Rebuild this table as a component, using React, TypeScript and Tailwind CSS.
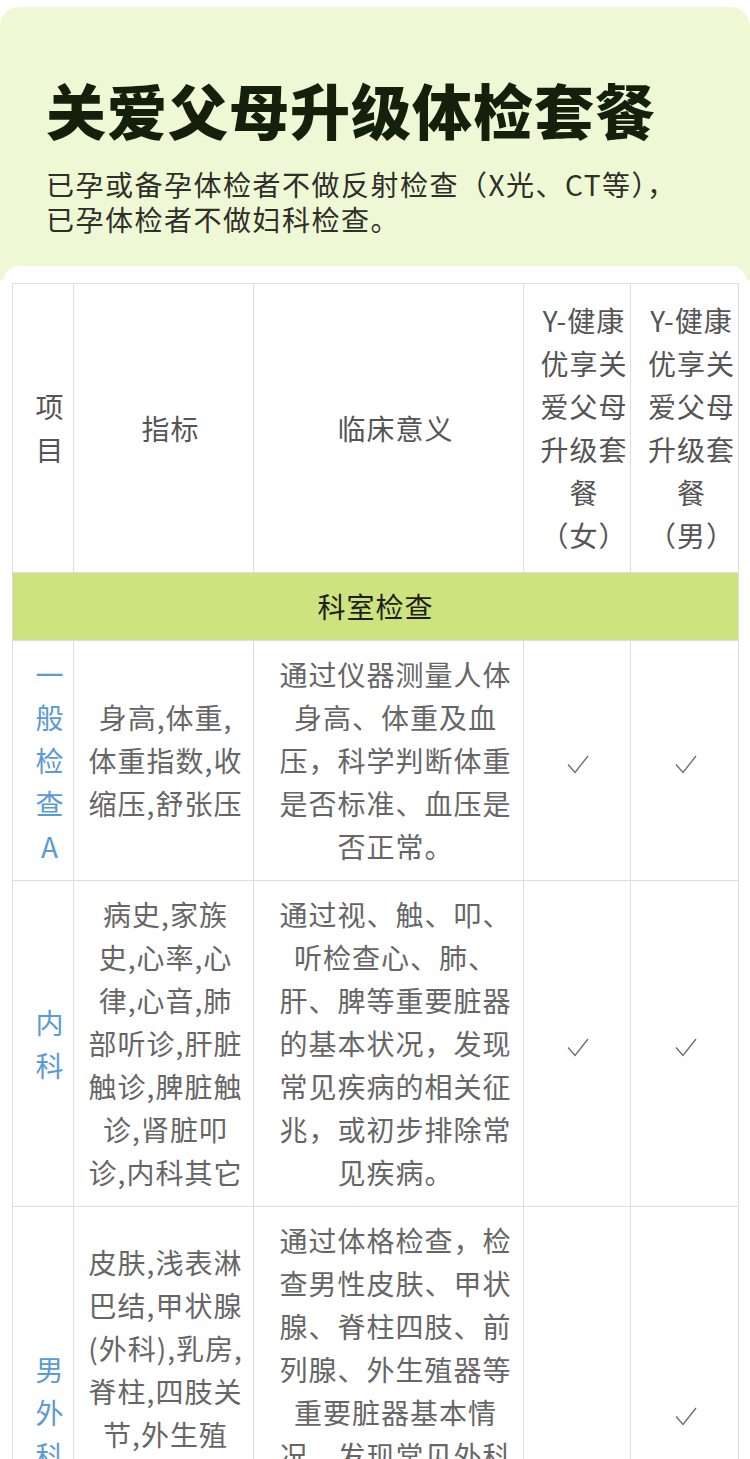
import React from 'react';

interface Row {
  item: string;
  index: string;
  meaning: string;
  female: boolean;
  male: boolean;
}

const rows: Row[] = [
  {
    item: '一般检查A',
    index: '身高,体重,体重指数,收缩压,舒张压',
    meaning: '通过仪器测量人体身高、体重及血压，科学判断体重是否标准、血压是否正常。',
    female: true,
    male: true,
  },
  {
    item: '内科',
    index: '病史,家族史,心率,心律,心音,肺部听诊,肝脏触诊,脾脏触诊,肾脏叩诊,内科其它',
    meaning: '通过视、触、叩、听检查心、肺、肝、脾等重要脏器的基本状况，发现常见疾病的相关征兆，或初步排除常见疾病。',
    female: true,
    male: true,
  },
  {
    item: '男外科',
    index: '皮肤,浅表淋巴结,甲状腺(外科),乳房,脊柱,四肢关节,外生殖器,肛门、直肠,前列腺,外科其它',
    meaning: '通过体格检查，检查男性皮肤、甲状腺、脊柱四肢、前列腺、外生殖器等重要脏器基本情况，发现常见外科疾病的相关征兆，或初步排除常见外科疾病。',
    female: false,
    male: true,
  },
];

const cell = 'border border-[#dedede] pl-[14px] pr-0 text-center align-middle';

// thin tick used in the package columns
const Check = () => (
  <svg width="22" height="19" viewBox="0 0 22 19" className="ml-[2px] inline-block align-middle">
    <polyline points="1,9.5 8,17.5 21,1" fill="none" stroke="#6a6a6a" strokeWidth="1.3" />
  </svg>
);

export default function App() {
  return (
    <div className="min-h-screen bg-white pt-[7px] font-['Noto_Sans_CJK_SC','Noto_Sans',sans-serif]">
      {/* Header */}
      <div className="rounded-t-[20px] bg-[#eef8d4] pl-[46px] pt-[72px] pb-[43px]">
        <h1 className="text-[60px] font-black leading-[60px] tracking-[1px] text-[#15200c]">
          关爱父母升级体检套餐
        </h1>
        <p className="mt-[28px] text-[28px] leading-[35px] tracking-[1.5px] text-[#2e2e2a]">
          已孕或备孕体检者不做反射检查（X光、CT等），
          <br />
          已孕体检者不做妇科检查。
        </p>
      </div>

      {/* Table card */}
      <div className="relative -mt-[14px] mx-[3px] rounded-t-[16px] bg-white px-[9px] pt-[17px]">
        <table className="w-[726px] table-fixed border-collapse text-[28px] leading-[43px] tracking-[1px]">
          <colgroup>
            <col className="w-[61px]" />
            <col className="w-[180px]" />
            <col className="w-[270px]" />
            <col className="w-[107px]" />
            <col className="w-[108px]" />
          </colgroup>
          <thead>
            <tr className="text-[#555555]">
              <th className={`${cell} py-[15px] font-normal`}>项目</th>
              <th className={`${cell} py-[15px] font-normal`}>指标</th>
              <th className={`${cell} py-[15px] font-normal`}>临床意义</th>
              <th className={`${cell} py-[15px] font-normal`}>Y-健康优享关爱父母升级套餐（女）</th>
              <th className={`${cell} py-[15px] font-normal`}>Y-健康优享关爱父母升级套餐（男）</th>
            </tr>
          </thead>
          <tbody>
            <tr>
              <td colSpan={5} className="border border-[#dedede] bg-[#cde37d] py-[12px] text-center text-[#1f1f1f]">
                科室检查
              </td>
            </tr>
            {rows.map(row => (
              <tr key={row.item} className="text-[#666666]">
                <td className={`${cell} py-[12px] text-[#5b9bd5]`}>{row.item}</td>
                <td className={`${cell} py-[12px] pr-[10px]`}>{row.index}</td>
                <td className={`${cell} py-[12px]`}>{row.meaning}</td>
                <td className="border border-[#dedede] text-center align-middle">{row.female && <Check />}</td>
                <td className="border border-[#dedede] text-center align-middle">{row.male && <Check />}</td>
              </tr>
            ))}
          </tbody>
        </table>
      </div>
    </div>
  );
}
